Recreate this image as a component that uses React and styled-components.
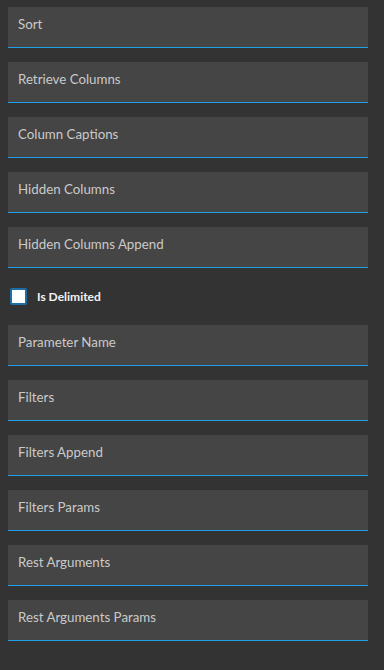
import styled, { createGlobalStyle } from "styled-components";

const Global = createGlobalStyle`
  html, body {
    margin: 0;
    background: #333333;
  }
`

const Page = styled.div`
  display: flex;
  flex-direction: column;
  gap: 14px;
  padding: 7px 16px 28px 8px;
  background: #333333;
  min-height: 670px;
  box-sizing: border-box;
  font-family: Lato, "Open Sans", sans-serif;
`

const Field = styled.div`
  height: 40px;
  background: #454545;
  border-bottom: 1px solid #21a0ea;
  padding: 0 10px;
  display: flex;
  align-items: flex-start;
`

const Label = styled.span`
  margin-top: 9px;
  font-size: 13.3px;
  line-height: 16px;
  color: #cacaca;
`

const CheckRow = styled.label`
  height: 30px;
  display: flex;
  align-items: center;
  gap: 10px;
  padding-left: 2px;
  margin-top: -1px;
`

const Box = styled.span`
  width: 17px;
  height: 17px;
  box-sizing: border-box;
  border: 2px solid #1d6ea6;
  border-radius: 2px;
  background: #ffffff;
`

const CheckText = styled.span`
  font-size: 12px;
  font-weight: 700;
  color: #f2f2f2;
`

const before = ["Sort", "Retrieve Columns", "Column Captions", "Hidden Columns", "Hidden Columns Append"];
const after = ["Parameter Name", "Filters", "Filters Append", "Filters Params", "Rest Arguments", "Rest Arguments Params"];

export default function App() {
  return (
    <>
      <Global />
      <Page>
        {before.map((t) => (
          <Field key={t}><Label>{t}</Label></Field>
        ))}
        <CheckRow>
          <Box />
          <CheckText>Is Delimited</CheckText>
        </CheckRow>
        {after.map((t) => (
          <Field key={t}><Label>{t}</Label></Field>
        ))}
      </Page>
    </>
  );
}
